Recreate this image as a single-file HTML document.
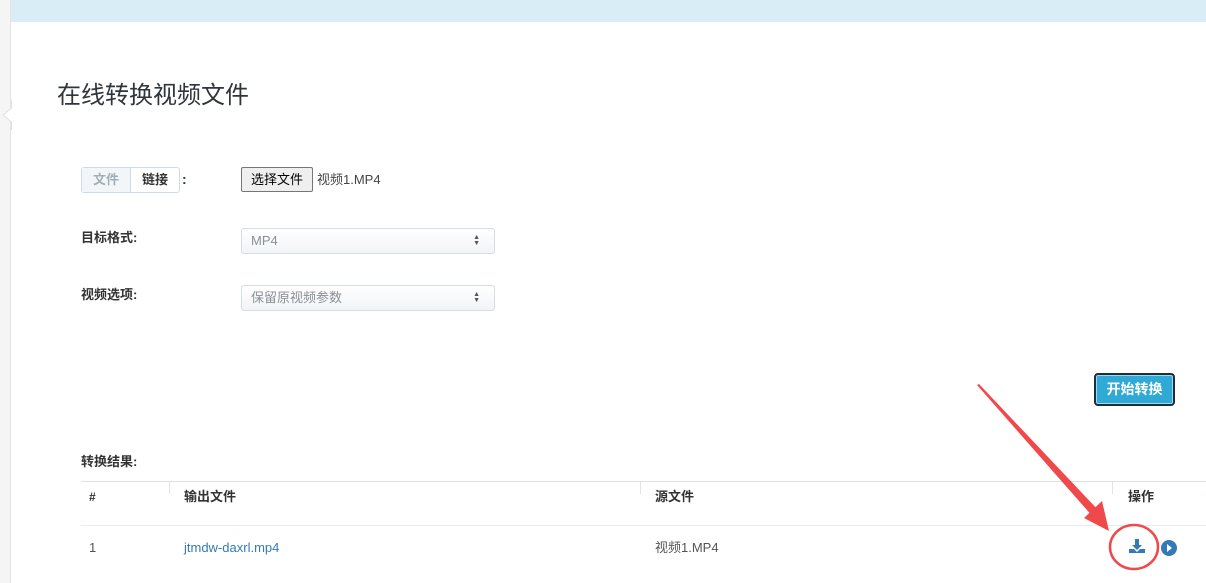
<!DOCTYPE html>
<html><head><meta charset="utf-8"><style>
*{margin:0;padding:0;box-sizing:border-box}
body{width:1206px;height:583px;overflow:hidden;background:#fff;position:relative;font-family:"Liberation Sans","Noto Sans CJK SC",sans-serif;color:#333;font-size:13px}
.a{position:absolute;white-space:nowrap;line-height:18px}
.b{font-weight:bold}
.sel{position:absolute;left:241px;width:254px;height:26px;border:1px solid #d5dde6;border-radius:3px;background:linear-gradient(#fff,#f1f4f7);color:#8a8f96;font-size:13px;padding:3px 9px;line-height:18px}
.sel:after{content:"▲\A▼";white-space:pre;position:absolute;right:14px;top:6px;font-size:7px;line-height:6px;color:#555}
</style></head><body>
<div class="a" style="left:0;top:0;width:11px;height:583px;background:#f5f5f5;border-right:1px solid #e4e4e4"></div>
<svg class="a" style="left:0;top:100px" width="14" height="30"><path d="M11.5 0 L11.5 8 L3 15 L11.5 22 L11.5 30" fill="#fff" stroke="#e0e0e0"/></svg>
<div class="a" style="left:11px;top:0;width:1195px;height:22px;background:#d9edf7"></div>
<div class="a" style="left:57px;top:81px;font-size:24px;line-height:30px;color:#2f353b">在线转换视频文件</div>
<div class="a" style="left:81px;top:167px;width:99px;height:26px;border:1px solid #cfdbe6;border-radius:3px;display:flex;font-size:13px;font-weight:bold">
<div style="width:49px;background:#f3f6f9;color:#a3adb8;text-align:center;line-height:24px;border-right:1px solid #cfdbe6">文件</div>
<div style="flex:1;text-align:center;line-height:24px;color:#333">链接</div></div>
<div class="a b" style="left:182px;top:170px;font-size:14px">:</div>
<div class="a" style="left:241px;top:167px;width:72px;height:25px;border:1px solid #767676;border-radius:2px;background:#efefef;font-size:13px;line-height:23px;text-align:center;color:#000">选择文件</div>
<div class="a" style="left:317px;top:171px;font-size:13px;color:#444">视频1.MP4</div>
<div class="a b" style="left:81px;top:229px">目标格式:</div>
<div class="sel" style="top:228px">MP4</div>
<div class="a b" style="left:81px;top:286px">视频选项:</div>
<div class="sel" style="top:285px">保留原视频参数</div>
<div class="a" style="left:1094px;top:373px;width:81px;height:33px;border:2px solid #1b2f3a;border-radius:4px;background:#2fa9d6;color:#fff;font-weight:bold;font-size:14px;text-align:center;line-height:29px;box-shadow:inset 0 0 0 1px #9fd9ef">开始转换</div>
<div class="a b" style="left:81px;top:453px">转换结果:</div>
<div class="a" style="left:81px;top:481px;width:1125px;height:1px;background:#dde2e7"></div>
<div class="a" style="left:81px;top:525px;width:1125px;height:1px;background:#e8edf2"></div>
<div class="a" style="left:169px;top:482px;width:1px;height:12px;background:#e3e3e3"></div>
<div class="a" style="left:640px;top:482px;width:1px;height:12px;background:#e3e3e3"></div>
<div class="a" style="left:1112px;top:482px;width:1px;height:12px;background:#e3e3e3"></div>
<div class="a b" style="left:89px;top:488px;font-size:12px">#</div>
<div class="a b" style="left:184px;top:488px">输出文件</div>
<div class="a b" style="left:655px;top:488px">源文件</div>
<div class="a b" style="left:1128px;top:488px">操作</div>
<div class="a" style="left:89px;top:539px;color:#555">1</div>
<div class="a" style="left:184px;top:539px;color:#337ab7">jtmdw-daxrl.mp4</div>
<div class="a" style="left:655px;top:539px;color:#555">视频1.MP4</div>
<svg class="a" style="left:1128px;top:538px" width="18" height="16"><path d="M7 1h4v6h3l-5 5-5-5h3z" fill="#337ab7"/><path d="M1 11h5l3 3 3-3h5v4H1z" fill="#337ab7"/></svg>
<svg class="a" style="left:1160px;top:539px" width="18" height="18"><circle cx="9" cy="9" r="8" fill="#337ab7"/><path d="M7 5l5 4-5 4z" fill="#fff"/></svg>
<svg class="a" style="left:0;top:0" width="1206" height="583">
<path d="M977 385 L979 384 L1100 512 L1094 518 Z" fill="#f0494c"/>
<path d="M1109 531 L1084 518 L1102 501 Z" fill="#f0494c"/>
<ellipse cx="1134" cy="547" rx="24" ry="22" fill="none" stroke="#f0494c" stroke-width="2.5"/>
</svg>
</body></html>
